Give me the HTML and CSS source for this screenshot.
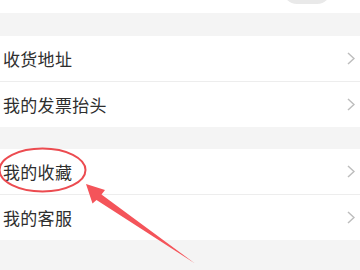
FILE: index.html
```html
<!DOCTYPE html>
<html lang="zh-CN">
<head>
<meta charset="utf-8">
<link rel="stylesheet" href="styles.css">
</head>
<body>
<div class="page">
  <div class="top">
    <div class="switch"></div>
  </div>
  <div class="group">
    <div class="row"><span class="label">收货地址</span><svg class="chev" viewBox="0 0 8 13"><path d="M1 1 L7 6.5 L1 12"/></svg></div>
    <div class="row"><span class="label">我的发票抬头</span><svg class="chev" viewBox="0 0 8 13"><path d="M1 1 L7 6.5 L1 12"/></svg></div>
  </div>
  <div class="group">
    <div class="row"><span class="label">我的收藏</span><svg class="chev" viewBox="0 0 8 13"><path d="M1 1 L7 6.5 L1 12"/></svg></div>
    <div class="row"><span class="label">我的客服</span><svg class="chev" viewBox="0 0 8 13"><path d="M1 1 L7 6.5 L1 12"/></svg></div>
  </div>
  <svg class="mark" viewBox="0 0 360 270">
    <ellipse cx="42.5" cy="170" rx="43" ry="21.5" fill="none" stroke="#ec4b50" stroke-width="2"/>
    <path d="M86 184 L105 190 L101.5 194.5 L195 263.5 L96.5 200 L92.5 203.5 Z" fill="#f4545a"/>
  </svg>
</div>
</body>
</html>
```
FILE: styles.css
```css
html, body {
  margin: 0;
  padding: 0;
}
body {
  background: #f4f4f4;
  font-family: "Noto Sans CJK SC", "Noto Sans", sans-serif;
}
.page {
  position: relative;
  width: 360px;
  height: 270px;
  overflow: hidden;
  background: #f4f4f4;
}
.top {
  height: 13px;
  background: #fff;
  display: flex;
  justify-content: flex-end;
  align-items: flex-end;
  padding-right: 29px;
  overflow: hidden;
}
.switch {
  width: 48px;
  height: 28px;
  margin-bottom: 9px;
  border-radius: 14px;
  background: #e9e9e9;
  flex: none;
}
.group {
  margin-top: 23px;
  background: #fff;
}
.group + .group {
  margin-top: 22px;
}
.row {
  height: 45px;
  display: flex;
  align-items: center;
  justify-content: space-between;
  padding: 0 5px 0 3px;
}
.row + .row {
  border-top: 1px solid #ededed;
}
.label {
  font-size: 17px;
  color: #2e2e2e;
  letter-spacing: 0.3px;
}
.chev {
  width: 8px;
  height: 13px;
  fill: none;
  stroke: #bdbdbd;
  stroke-width: 1.5;
}
.mark {
  position: absolute;
  left: 0;
  top: 0;
  width: 360px;
  height: 270px;
  pointer-events: none;
}
```
